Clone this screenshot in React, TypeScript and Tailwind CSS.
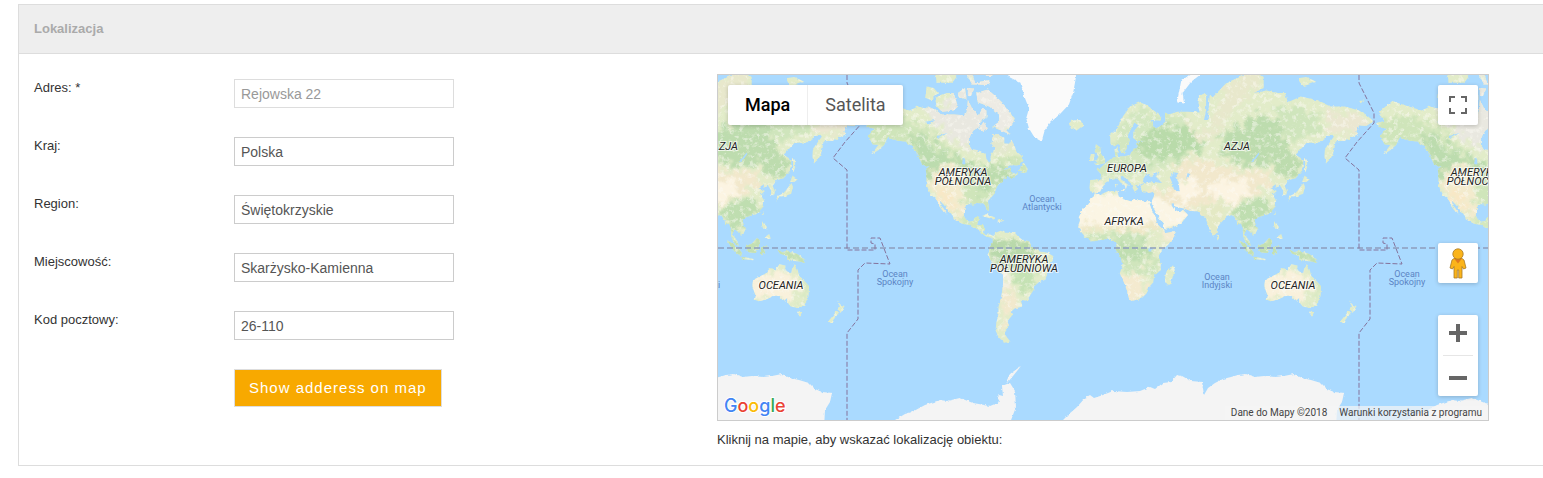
import React from 'react'

const fields = [
  { id: 'address', label: 'Adres: *', value: 'Rejowska 22', muted: true },
  { id: 'country', label: 'Kraj:', value: 'Polska' },
  { id: 'region', label: 'Region:', value: 'Świętokrzyskie' },
  { id: 'city', label: 'Miejscowość:', value: 'Skarżysko-Kamienna' },
  { id: 'zip', label: 'Kod pocztowy:', value: '26-110' },
]

// one world is 512px wide, x = 0 is the 180° meridian and y = 0 the equator
const WORLD = 512

const project = (lon: number, lat: number) => {
  const x = ((lon + 180) / 360) * WORLD
  const y = (-WORLD / (2 * Math.PI)) * Math.asinh(Math.tan((lat * Math.PI) / 180))
  return `${x.toFixed(1)} ${y.toFixed(1)}`
}

// "lon,lat lon,lat ..." -> svg path
const toPath = (shape: string) =>
  'M' +
  shape
    .split(' ')
    .map((p) => {
      const [lon, lat] = p.split(',').map(Number)
      return project(lon, lat)
    })
    .join('L') +
  'Z'

const land = [
  // north america
  '-168,65.6 -162,66.2 -166.5,68.4 -163,69.5 -156.5,71.3 -152,70.8 -145,70 -141,69.6 -136,69 -130,70 -125,69.5 -123,70 -117,69 -114,68 -108,68 -105,68 -98,67.8 -96,68.3 -95,71.5 -92,69.5 -90,68.8 -87.5,67.5 -85,69.5 -82,69 -82,67 -86,66.3 -87,64.5 -91,63.5 -93,62 -94.5,60 -94.5,58.8 -92.5,57 -88,56.5 -82.5,55.2 -82,53 -80,51.3 -79,52 -79,54.5 -77,56 -76.5,57.5 -78.5,59 -77.5,60.5 -78,62.3 -74,62.2 -72,61.5 -69.5,61 -69.5,59 -66,58.8 -64.5,60.3 -62,58 -61,56 -57.5,54.5 -56,52 -60,50.2 -66,50.2 -70,47.5 -65,49.2 -65,47 -61,46 -60,47 -60,46 -65,43.5 -66,45 -70,43.7 -70.5,42 -74,40.6 -75.5,38 -76,36 -77.5,34.5 -81,31.5 -80.2,27 -80.5,25.2 -81.8,26 -82.7,28.5 -84,30 -89,30.2 -91,29.2 -94.5,29.5 -97.3,27.5 -97.7,23 -97,20.5 -95.5,18.6 -94,18.2 -91,18.7 -90.4,21 -87,21.5 -88,18 -88.5,16 -84,15.8 -83.3,14 -83.7,11 -82,9 -79.5,9.5 -77.5,8.6 -78,7 -80,7.5 -83,8.3 -85.7,10 -87.5,13 -91,14 -94,16.1 -99,16.8 -105,19.8 -105.5,22 -109,26 -112.5,29.5 -114.7,31.7 -114.5,30 -111.5,26 -110,23 -112,24.7 -114.5,27.2 -116,30 -117.2,32.7 -120.6,34.6 -122.5,37.5 -124.2,40.4 -124,46 -124.7,48.4 -122.8,49 -127.5,51 -130,54.3 -134,58 -139,59.7 -144,60 -148,60.5 -151.5,61 -154,58.5 -158,56.5 -163,54.8 -158,58.5 -162,58.7 -165,61.5 -161,64 -166,64.5',
  // south america
  '-77.5,8.6 -75.5,10.6 -72,12 -71.5,11 -70,12 -68,10.7 -62,10.6 -60,8.4 -57,6 -52,4.8 -50,1 -48,-0.8 -44,-2.7 -40,-3 -35.3,-5.5 -35,-8.5 -39,-13 -39,-18 -41,-22 -45,-23.3 -48.5,-26 -49,-28.6 -52,-32.5 -54,-34.7 -58,-34.2 -57,-36.5 -58,-38.3 -62,-39 -65,-41 -63.7,-42.5 -67,-45.5 -66,-48 -69,-51 -68.3,-52.5 -65.3,-54.7 -69,-55.4 -73.5,-53 -75.5,-50 -75,-46.5 -73.5,-42 -73.5,-38 -71.6,-33 -70.3,-25 -70.3,-18.3 -76.2,-13.8 -79.5,-7.5 -81.2,-5 -80,-2.5 -80.2,0.5 -78.5,2 -77.4,4 -77.6,7',
  // africa
  '-6,35.8 -2,35 3,36.9 10,37.3 11,34 15.2,32.3 20,31 22,32.8 29,31 34,31.2 32.6,29.9 35,24 37.3,21 37.5,18.5 39.5,15.3 43.2,12.2 44.5,10.5 51.2,11.8 50,8 46,2.5 41,-2 39,-6 40.6,-11 40.5,-15.5 36,-18.8 35.3,-23.5 32.8,-26 31,-30 27,-33.5 20,-34.8 18.3,-33.5 17,-29 14.5,-23 11.8,-17.5 13.8,-12 12.3,-6 9,-1.5 9.7,3.5 8,4.5 5,5.8 2,6.3 -4,5.2 -8,4.5 -13,8.5 -16.5,12.5 -17.4,14.7 -16.2,19 -17,21 -14.5,26 -10,29.5 -9.5,32 -6.5,34',
  '49.3,-12 50.5,-15.5 47.2,-25 44,-24.5 43.5,-21.5 44.5,-16.5',
  // europe and asia
  '-9,37 -9.5,39 -9,43 -1.8,43.4 -1.2,46 -4.5,48.3 -1.5,49 1.6,50.9 4.5,52.5 8.5,54 8.2,57 10.5,57.5 10,55 11,54 14,54 19,54.5 21,57 24,57.2 23.5,59.2 30,60 23,60 21.3,61 21.5,63 25.3,65 22,65.8 17.5,62 18.8,60 16.5,57 14.3,55.5 12.8,55.5 11,59 8,58 5.3,59 5,62 10,64 14,67.5 19,70 25.7,71 31,70.3 41,67.5 40.5,66.4 33,66.6 37,64 40,64.6 44,66 43.5,68.5 46,68 53,68.7 60,68.7 68,68.5 67,70 67.5,72.5 72.5,73 72.5,69 71,66.5 73.5,66.5 74,68 75,72.5 77,72 80,73 87,75 98,76.2 104,77.5 113,76 113,74 106,73 115,73.5 123,73 128,73 130,71 139,72.3 150,71.5 160,70 170,70 180,69 188,67 190,66.1 185,64.8 180,65 178,63 179.5,62.3 170,60 163.5,59.8 163,57.8 161.8,55 160,53 156.8,51 155.7,54 156,57 162.5,61.5 157,61.7 154,59.5 143,59.2 135.5,54.7 141,52.5 140.3,48 135.5,44 131,43 127.7,40 129.4,37 129,35.3 126.5,34.5 126.7,37.5 124.5,40 121.5,39 121.5,40.8 118,39 122.3,37.2 119.3,35 121.8,31.5 121.5,28.3 118,24.5 114,22.4 109.8,21.5 106.5,20 107,17 109.2,13 107,10.5 105,8.7 105,10.5 102,12.3 100.8,13.4 99.5,10 103.3,4 103.8,1.4 100.5,4 98.5,8 98.3,14 97,17 94.3,16 94,19 91.5,22.5 87,21.5 82,16.7 80.2,14 79.8,10.5 77.5,8 74.5,14 72.8,19 72.5,21.5 69,22.2 66.8,25 61.5,25.1 57,26.8 51,28 50,30 48,30 48.3,28.5 51,24.5 51.5,25.5 54,24.2 56.3,26 59.8,22.5 55.2,17.5 52,15.6 45,12.8 43,13.2 42.5,16.5 39,21.3 35,28 34.5,29.5 34.3,31.3 36,34.5 36,36.8 32,36.1 30.5,36.7 27.5,37 26.3,39 27,40.3 29,41.1 35,42 41.5,41.5 37,45 39,47.2 35,46.3 36,45.3 33.5,44.5 33,46 30.5,46.3 28.7,44 28,42 28.5,41.2 26,40.7 23.5,40.4 24,38 22.5,36.5 21,38.5 19.5,41.5 15,44.3 13.5,45.6 12.4,44.5 14,42.5 18.4,40.2 16.8,40.3 16,38 15.7,40 12.3,41.7 10.3,43.8 8,44 4,43.4 3,42 -0.3,39.5 -2,36.8 -5.5,36.2',
  // australia, tasmania, new zealand
  '114,-22 113.5,-26 115.8,-32 115.2,-34.2 118,-35 123.5,-33.9 129,-31.6 132,-32 135.5,-34.8 138,-33 138,-35.6 140.5,-38 146.3,-39 150,-37.5 153,-32 153.3,-26 149.5,-22 146.3,-19 145.3,-15 142.5,-10.8 141.5,-14 140.8,-17.5 136,-15.5 136.8,-12.2 132.5,-11.4 130,-14.8 126,-14 122.3,-18',
  '144.8,-40.8 148.3,-41 147,-43.6',
  '173,-34.6 175.5,-37 178.3,-37.8 175.5,-41.5 174,-39.3 175,-38',
  '172.7,-40.6 174,-41.6 171,-44.5 169,-46.5 166.7,-45.8',
  // arctic canada
  '-65,62 -72,63.5 -78,64.5 -73,66 -73,68 -80,70 -88,71 -89,73 -81,73.7 -77,72.7 -71,71 -67,69 -62,67 -64,65 -68,63.5',
  '-117,70 -118,72 -110,73 -105,73 -102,70 -105,69 -113,68.7',
  '-125,72 -124,74.3 -119,74 -116,73 -121,71.5',
  '-87,64 -84,66 -81,64 -84,63',
  '-92,76.6 -90,75 -80,75.5 -80,74.6 -92,74.7 -96,76.6',
  '-82,76.2 -78,76.2 -75,78 -88,78',
  '-117,75 -106,75 -103,76 -106,76.9 -118,76.7',
  '-102,73 -97,74 -96,71.8 -101,72',
  '-95,72.5 -95,74 -90.5,73.9 -93,72.3',
  '-59,47.6 -56,51.5 -53,48.5 -54,46.8',
  // caribbean
  '-85,22 -82,23.3 -75,20.7 -77,19.7',
  '-74,19.8 -68.5,18.8 -74,18',
  // british isles, iceland
  '-5.5,50 1.3,51.2 1.5,52.8 -1.5,55 -2,57.5 -5,58.7 -5.8,56 -3,54 -4.8,52',
  '-10,51.8 -6,52.3 -6,55 -8.5,55',
  '-24,65.5 -22,66.4 -16,66.5 -13.7,65 -18.5,63.4 -22.5,64',
  // mediterranean islands
  '12.5,38 15.5,38.2 15,36.8',
  '8.3,41 9.7,41 9,39',
  // russia, japan
  '137,75.8 143,76 150,75.2 146,74.8 140,74.3',
  '142,46.5 142,54 143.5,52 143.5,49',
  '180,71.3 184,71.4 182,70.8',
  '130,31.5 131,34.2 135,35.8 137,37.4 139.5,40 141,41.4 142,39.5 140.8,35.6 137,34.5 133,34',
  '140,42 141.7,45.4 145.3,43.3 143,42',
  // south east asia
  '120,22.5 121.5,25.2 121.5,23',
  '120.3,16 121,18.5 122,17 124,13 120.8,14',
  '122,7.5 125.3,9.7 126.3,7 124,6.2',
  '109,1.5 113,3 116.8,7 119,5 117.8,1 116,-3.5 110.5,-3',
  '95.3,5.6 98,4 103.5,0 106,-3.3 105.5,-5.8 101,-2.5',
  '105.5,-6.5 108,-6.5 114.4,-7.7 114,-8.6 107,-7.8',
  '119.5,-5.3 119.5,0.5 125,1.5 121,0 123,-4.5 121,-3',
  '131,-1 134.5,-3 138,-1.7 144.5,-4 147.7,-6 150.5,-10.5 147,-9.5 143,-9 138,-8.2 137.8,-5.5 133,-4',
  '80,9.5 81.8,7.5 80.3,6',
  '-69.5,-52.5 -65,-54.7 -70,-55.2',
]

const ice = [
  '-44,60 -48,61 -52,64 -54,67 -52,69.5 -55,72 -58,75 -66,76 -70,78 -60,82 -20,82 -19,76 -21,73 -24,70.5 -30,68.2 -37,65.8 -41,63.5 -43,60',
  '52,71 57,70.7 56,73 62,75.2 69,76.5 66,77.3 55,75.3',
]

const water = [
  '47,44.5 50,46.8 53,46.5 51,44.5 53,42 54,37 50,37.3 49,41',
  '58.5,44 59.5,46.5 61.5,46',
  '104,51.5 109.5,55.6 110,55 106,51.8',
  '-92,46.8 -88,48.8 -84.5,46.7 -88,46.8',
  '-87.5,42 -87.5,45 -85,45.7 -86.2,42',
  '-117,61.5 -109,62.7 -115,61',
  '-125,66 -118,66.5 -122,65.2',
  '-99,50.5 -98.5,53.5 -97,53 -96.7,50.6',
  '32,-2.5 32,0.3 34.5,0 34,-2.5',
]

// ground cover, clipped to the land outline
const cover = [
  { fill: '#cfe5ba', shape: '-168,58 -168,66 -150,68 -138,67 -125,64 -110,58 -96,53 -80,50 -70,52 -55,54 -50,46 -72,38 -78,30 -82,24 -90,28 -98,30 -98,48 -118,50 -126,38 -128,50 -140,58' },
  { fill: '#bcdcae', shape: '-138,62 -125,62 -115,56 -100,53 -90,50 -78,49 -62,50 -62,46 -74,42 -82,35 -88,36 -84,44 -92,47 -104,51 -113,50 -121,42 -125,42 -130,54' },
  { fill: '#e9e8e0', shape: '-126,69.5 -115,64 -104,60 -96,57 -90,56 -80,63 -80,76 -100,76 -106,72 -118,69' },
  { fill: '#e3e8cf', shape: '-79,63 -79,56 -72,55 -64,58 -66,63' },
  { fill: '#edebe4', shape: '-90,78 -74,78 -60,66 -64,61 -74,63 -92,70' },
  { fill: '#f3ebcd', shape: '-119,49 -104,49 -99,42 -98,30 -98,24 -101,18 -106,20 -118,33 -122,40 -118,44' },
  { fill: '#f8e8c6', shape: '-116,37 -108,38 -104,30 -104,24 -109,28 -115,32' },
  { fill: '#d4e8be', shape: '-106,22 -97,22 -88,23 -76,8 -84,7' },
  { fill: '#b9d9ab', shape: '-80,4 -72,7 -62,6 -50,3 -45,-3 -50,-10 -58,-13 -66,-15 -75,-11 -80,-3' },
  { fill: '#c5e2b4', shape: '-63,-16 -52,-14 -47,-20 -48,-28 -54,-31 -62,-24' },
  { fill: '#f2e9cd', shape: '-72,-18 -67,-20 -64,-30 -61,-37 -66,-45 -68,-51 -72,-50 -70,-40 -72,-30' },
  { fill: '#f4f0e4', shape: '-78,-8 -70,-13 -66,-20 -69,-30 -72,-25 -73,-16' },
  { fill: '#fbf5e4', shape: '-20,15 -20,36 0,36 12,38 35,33 48,31 57,25 62,22 50,14 42,15 36,16 20,14 0,15' },
  { fill: '#efe8c8', shape: '-20,12 -20,16 0,17 20,16 38,17 38,12 20,10 0,12' },
  { fill: '#f4ecd4', shape: '42,12 54,13 48,3 41,3' },
  { fill: '#bfdeb0', shape: '9,5 18,7 28,5 31,-2 29,-10 22,-9 12,-8 8,-2' },
  { fill: '#cbe4ba', shape: '-14,10 -6,9 8,9 20,10 30,9 36,8 30,4 5,3 -10,3' },
  { fill: '#cfe5bc', shape: '13,-9 30,-10 40,-7 42,-15 36,-20 30,-17 15,-16' },
  { fill: '#f4eacf', shape: '10,-18 20,-18 28,-19 31,-26 24,-35 16,-34' },
  { fill: '#d3e7c0', shape: '-10,44 -5,50 -6,59 8,58 12,64 24,70 40,68 60,68 60,50 44,50 28,46 14,45 8,45 2,44' },
  { fill: '#b9dbaa', shape: '22,57 30,63 44,65 62,64 72,61 70,57 56,54 42,53 30,54' },
  { fill: '#e8e8cc', shape: '60,70 60,64 75,63 82,72 100,78 112,77 100,71 88,68 80,60 64,60' },
  { fill: '#bddcae', shape: '84,62 100,66 114,68 122,66 128,60 134,54 140,50 138,45 131,43 125,46 118,50 106,50 92,51 82,54' },
  { fill: '#cfe5bc', shape: '120,70 136,70 154,68 150,62 136,60 126,62' },
  { fill: '#ebe7d1', shape: '156,69 184,68 186,64 172,62 160,63' },
  { fill: '#f2e8cc', shape: '28,37 45,38 58,40 48,50 60,53 76,52 90,49 106,48 120,47 116,40 104,35 92,28 76,33 66,24 58,25 45,32 36,33' },
  { fill: '#fcf4e2', shape: '74,40 88,44 104,41 104,37 92,30 80,32' },
  { fill: '#fcf4e2', shape: '54,42 66,44 68,38 60,30 52,33' },
  { fill: '#e4e9c4', shape: '68,26 76,32 88,25 82,16 78,8 72,16' },
  { fill: '#bfdeb0', shape: '96,28 104,33 112,33 120,30 118,24 110,21 108,12 98,14 98,8 94,18 90,24' },
  { fill: '#c3e0b3', shape: '95,6 108,7 122,7 126,0 152,-4 152,-11 130,-9 104,-9 94,0' },
  { fill: '#f9f1dc', shape: '113,-16 124,-17 134,-17 144,-20 146,-29 140,-35 128,-34 118,-33 112,-34' },
  { fill: '#d3e7bf', shape: '148,-17 151,-24 154,-28 150,-38 144,-39 151,-32 149,-24' },
  { fill: '#f6edd5', shape: '-8,42 -2,42 -1,38 -5,37' },
]

// shapes below are already in map pixels
const antarctica =
  'M212 180L216 172 222 166 230 159 238 150 243 147 247 150 256 147 266 143 280 144 293 143 303 139 308 141 316 135 324 134 330 127 335 128 344 133 355 134 357 147 361 140 368 135 376 131 384 129 391 127 399 126 408 129 417 128 428 129 437 128 447 126 455 130 464 132 474 135 480 141 487 144 497 145 495 154 490 162 489 180ZM40 180L48 172 58 166 65 164 78 157 93 152 100 153 113 150 126 155 143 158 153 154 150 149 152 147 156 148 155 138 160 136 163 135 168 143 169 159 161 180ZM160 132L163 126 174 118 166 128 161 134Z'
const dateLine =
  'M0-173V-165L15-135V-125L-2-106-14-90 0-78V2H28V-4L24-5V-10H33L43 16 18 15 11 22V71L0 85V172'

const continents = [
  { x: 116, y: -72, lines: ['AMERYKA', 'PÓŁNOCNA'] },
  { x: 177, y: 15, lines: ['AMERYKA', 'POŁUDNIOWA'] },
  { x: 280, y: -76, lines: ['EUROPA'] },
  { x: 277, y: -23, lines: ['AFRYKA'] },
  { x: 390, y: -98, lines: ['AZJA'] },
  { x: 446, y: 41, lines: ['OCEANIA'] },
]

const oceans = [
  { x: 48, y: 29, lines: ['Ocean', 'Spokojny'] },
  { x: 195, y: -46, lines: ['Ocean', 'Atlantycki'] },
  { x: 370, y: 32, lines: ['Ocean', 'Indyjski'] },
]

// the map repeats sideways, keep only the labels that reach into view
const copies = <T extends { x: number; lines: string[] }>(labels: T[]) =>
  [-WORLD, 0, WORLD]
    .flatMap((dx) => labels.map((l) => ({ ...l, x: l.x + dx })))
    .filter((l) => l.x > -150 && l.x < 650)

const landPath = land.map(toPath).join('')

const WorldMap = () => (
  <svg
    className="absolute inset-0 h-full w-full bg-[#aadaff]"
    viewBox="-129 -173 770 345"
    preserveAspectRatio="xMidYMid slice"
    role="img"
    aria-label="Mapa"
  >
    <defs>
      <clipPath id="land-clip">
        <path d={landPath} />
      </clipPath>
      <filter id="coast" x="-5%" y="-5%" width="110%" height="110%">
        <feTurbulence type="fractalNoise" baseFrequency="0.3" numOctaves="2" seed="4" />
        <feDisplacementMap in="SourceGraphic" scale="3" xChannelSelector="R" yChannelSelector="G" />
      </filter>
      <filter id="patches" x="-5%" y="-5%" width="110%" height="110%">
        <feTurbulence type="fractalNoise" baseFrequency="0.14" numOctaves="4" seed="9" />
        <feDisplacementMap in="SourceGraphic" scale="26" xChannelSelector="R" yChannelSelector="G" />
        <feGaussianBlur stdDeviation="0.9" />
      </filter>
      <filter id="relief" x="0" y="0" width="100%" height="100%">
        <feTurbulence type="fractalNoise" baseFrequency="0.2" numOctaves="3" seed="21" />
        <feColorMatrix values="0 0 0 0 0.97  0 0 0 0 0.96  0 0 0 0 0.9  5 0 0 0 -2.6" />
      </filter>
      <g id="world">
        <g filter="url(#coast)">
          <path d={landPath} fill="#e2ecc9" />
          <g clipPath="url(#land-clip)">
            <g filter="url(#patches)">
              {cover.map((c, i) => (
                <path key={i} d={toPath(c.shape)} fill={c.fill} />
              ))}
            </g>
            <rect x="0" y="-180" width="530" height="280" filter="url(#relief)" opacity="0.5" />
          </g>
          <path d={ice.map(toPath).join('')} fill="#fafafa" />
          <path d={water.map(toPath).join('')} fill="#aadaff" />
          <path d={antarctica} fill="#f4f4f4" />
        </g>
      </g>
    </defs>

    {[-1, 0, 1].map((n) => (
      <use key={n} href="#world" x={n * WORLD} />
    ))}
    <path d="M-129 0H641" stroke="#8e9dbd" strokeWidth="1.5" strokeDasharray="6 3" />
    {[0, 1].map((n) => (
      <path
        key={n}
        d={dateLine}
        transform={`translate(${n * WORLD})`}
        fill="none"
        stroke="#85739c"
        strokeDasharray="5 2"
      />
    ))}

    <g textAnchor="middle" className="font-[Roboto,sans-serif]">
      {copies(continents).map((c) =>
        c.lines.map((line, i) => (
          <text
            key={line + c.x}
            x={c.x}
            y={c.y + i * 9}
            className="fill-[#222] stroke-white/70 stroke-2 text-[11px] italic [paint-order:stroke]"
          >
            {line}
          </text>
        ))
      )}
      {copies(oceans).map((o) =>
        o.lines.map((line, i) => (
          <text key={line + o.x} x={o.x} y={o.y + i * 8} className="fill-[#5b84c4] text-[9px]">
            {line}
          </text>
        ))
      )}
    </g>
  </svg>
)

const GoogleLogo = () => (
  <svg className="absolute bottom-0 left-1.5 h-7 w-[66px]" viewBox="0 0 66 28" role="img" aria-label="Google">
    <text x="0" y="20" className="stroke-white stroke-2 font-[Inter,sans-serif] text-[18px] font-medium [paint-order:stroke]">
      <tspan fill="#4285f4">G</tspan>
      <tspan fill="#ea4335">o</tspan>
      <tspan fill="#fbbc05">o</tspan>
      <tspan fill="#4285f4">g</tspan>
      <tspan fill="#34a853">l</tspan>
      <tspan fill="#ea4335">e</tspan>
    </text>
  </svg>
)

const Pegman = () => (
  <svg width="18" height="31" viewBox="0 0 18 31" aria-hidden="true">
    <path
      d="M5 10.500h8l2 1.500 2 8-2.500 1-1.500-2.500V30H9.700v-8H8.300v8H5V18.500L3.500 21 1 20l2-8z"
      fill="#fbb41a"
      stroke="#a77a26"
      strokeWidth="0.8"
    />
    <path d="M5 10.500h8L9 15.500z" fill="#e07a1f" />
    <circle cx="9" cy="6" r="5.200" fill="#fbb41a" stroke="#a77a26" strokeWidth="0.8" />
  </svg>
)

const controlBox = 'flex items-center justify-center rounded-xs bg-white shadow-[0_1px_4px_rgba(0,0,0,0.2)]'

const MapView = () => (
  <div className="relative h-[347px] overflow-hidden border border-[#ccc] font-[Roboto,sans-serif]">
    <WorldMap />
    <div className="absolute left-2.5 top-2.5 flex h-10 rounded-xs bg-white text-lg shadow-[0_1px_4px_rgba(0,0,0,0.2)]">
      <button type="button" className="border-r border-[#eee] px-[17px] font-medium text-black">Mapa</button>
      <button type="button" className="px-[17px] text-[#565656]">Satelita</button>
    </div>

    <button type="button" aria-label="Pełny ekran" className={`${controlBox} absolute right-2.5 top-2.5 size-10`}>
      <svg width="18" height="18" viewBox="0 0 18 18" fill="none" stroke="#666" strokeWidth="2" aria-hidden="true">
        <path d="M1 6V1h5M12 1h5v5M17 12v5h-5M6 17H1v-5" />
      </svg>
    </button>

    <div className="absolute bottom-6 right-2.5 flex flex-col gap-8">
      <button type="button" aria-label="Street View" className={`${controlBox} size-10`}>
        <Pegman />
      </button>
      <div className="rounded-xs bg-white shadow-[0_1px_4px_rgba(0,0,0,0.2)]">
        <button type="button" aria-label="Powiększ" className="flex h-10 w-10 items-center justify-center pb-1">
          <svg width="18" height="18" viewBox="0 0 18 18" fill="#666" aria-hidden="true">
            <path d="M7 0h4v7h7v4h-7v7H7v-7H0V7h7z" />
          </svg>
        </button>
        <div className="mx-[5px] h-px bg-[#e6e6e6]" />
        <button type="button" aria-label="Pomniejsz" className="flex h-10 w-10 items-center justify-center pt-1">
          <svg width="18" height="4" viewBox="0 0 18 4" aria-hidden="true">
            <path d="M0 0h18v4H0z" fill="#666" />
          </svg>
        </button>
      </div>
    </div>

    <GoogleLogo />
    <div className="absolute bottom-0 right-0 flex h-3.5 text-[10px] leading-[14px] text-[#444]">
      <span className="bg-[#f5f5f5]/70 px-1.5">Dane do Mapy ©2018</span>
      <a href="#warunki" className="bg-[#f5f5f5]/70 px-1.5">Warunki korzystania z programu</a>
    </div>
  </div>
)

const App = () => {
  return (
    <section className="ml-[18px] mt-1 border border-r-0 border-[#ddd] bg-white font-['Liberation_Sans',Arial,sans-serif] text-[13px] text-[#333]">
      <h2 className="border-b border-[#ddd] bg-[#eee] px-[15px] py-4 font-bold leading-4 text-[#aaa]">Lokalizacja</h2>
      <div className="grid grid-cols-[683fr_772fr] pb-4 pl-[15px] pr-[54px] pt-5">
        <form className="pt-[5px]" onSubmit={(e) => e.preventDefault()}>
          {fields.map((f) => (
            <div key={f.id} className="flex h-[58px] items-start">
              <label htmlFor={f.id} className="w-[200px] leading-[18px]">{f.label}</label>
              <input
                id={f.id}
                type="text"
                defaultValue={f.value}
                className={`h-[29px] w-[220px] border bg-white px-1.5 text-sm ${
                  f.muted ? 'border-[#ddd] text-[#999]' : 'border-[#ccc] text-[#555]'
                }`}
              />
            </div>
          ))}
          <button
            type="submit"
            className="ml-[200px] h-[38px] border border-[#ddd] bg-[#f8a900] px-3.5 text-[15px] tracking-[1px] text-white"
          >
            Show adderess on map
          </button>
        </form>
        <div>
          <MapView />
          <p className="mt-2.5 leading-[18px]">Kliknij na mapie, aby wskazać lokalizację obiektu:</p>
        </div>
      </div>
    </section>
  )
}

export default App
